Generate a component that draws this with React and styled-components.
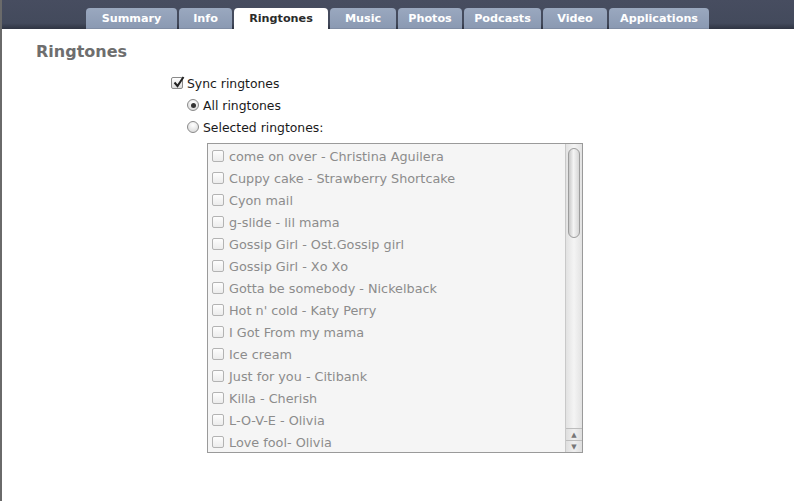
import React from "react";
import styled, { createGlobalStyle } from "styled-components";

const Global = createGlobalStyle`
  body {
    margin: 0;
    background: #fff;
    font-family: "Lucida Grande", "DejaVu Sans", sans-serif;
  }
`;

const Page = styled.div`
  width: 794px;
  height: 501px;
  overflow: hidden;
  display: flex;
  flex-direction: column;
  border-left: 2px solid #6a6a6a;
  box-sizing: border-box;
`;

const TopBar = styled.div`
  height: 29px;
  background: linear-gradient(#474d60, #434a5c 80%, #2f3442);
  display: flex;
  align-items: flex-end;
  padding-left: 84px;
  gap: 2px;
`;

const Tab = styled.div`
  height: 21px;
  border-radius: 4px 4px 0 0;
  background: ${(p) => (p.$active ? "#fff" : "linear-gradient(#9aa8bf, #8a99b2)")};
  color: ${(p) => (p.$active ? "#2b2b2b" : "#fff")};
  font-family: "DejaVu Sans", sans-serif;
  font-weight: bold;
  font-size: 11.2px;
  display: flex;
  align-items: center;
  justify-content: center;
  box-shadow: ${(p) => (p.$active ? "none" : "inset 0 -1px 0 #7f8ca3")};
  width: ${(p) => p.$w}px;
  box-sizing: border-box;
`;

const Body = styled.div`
  padding: 13px 0 0 34px;
`;

const Heading = styled.h2`
  margin: 0;
  font-family: "DejaVu Sans", sans-serif;
  font-size: 16px;
  font-weight: bold;
  color: #6e6e6e;
  height: 30px;
`;

const Options = styled.div`
  margin-left: 135px;
  display: flex;
  flex-direction: column;
`;

const Row = styled.div`
  display: flex;
  align-items: center;
  height: 22px;
  gap: 4px;
  margin-left: ${(p) => p.$indent || 0}px;
  font-size: 12.4px;
  color: #1a1a1a;
`;

const Check = styled.span`
  width: 12px;
  height: 12px;
  box-sizing: border-box;
  border: 1px solid ${(p) => (p.$dim ? "#b3b3b3" : "#8a8a8a")};
  border-radius: 2px;
  background: ${(p) => (p.$dim ? "linear-gradient(#fdfdfd, #ececec)" : "linear-gradient(#fff, #dcdcdc)")};
  position: relative;
  flex: none;
`;

const Tick = styled.svg`
  position: absolute;
  left: 0;
  top: -3px;
`;

const Radio = styled.span`
  width: 12px;
  height: 12px;
  box-sizing: border-box;
  border-radius: 50%;
  border: 1px solid #8a8a8a;
  background: radial-gradient(circle at 50% 30%, #fff, #d4d4d4);
  display: flex;
  align-items: center;
  justify-content: center;
  flex: none;
  &::after {
    content: "";
    width: 5px;
    height: 5px;
    border-radius: 50%;
    background: ${(p) => (p.$on ? "#333" : "transparent")};
  }
`;

const ListBox = styled.div`
  margin: 5px 0 0 36px;
  width: 376px;
  height: 310px;
  border: 1px solid #9a9a9a;
  background: #f5f5f5;
  box-sizing: border-box;
  display: flex;
  overflow: hidden;
`;

const Items = styled.div`
  flex: 1;
  padding: 1px 0 0 4px;
`;

const Item = styled.div`
  display: flex;
  align-items: center;
  gap: 5px;
  height: 22px;
  font-size: 12.8px;
  color: #8c8c8c;
  white-space: nowrap;
`;

const Scroll = styled.div`
  width: 16px;
  border-left: 1px solid #c9c9c9;
  background: linear-gradient(90deg, #e2e2e2, #f4f4f4 50%, #e2e2e2);
  display: flex;
  flex-direction: column;
`;

const Track = styled.div`
  flex: 1;
  padding: 4px 2px 0;
`;

const Thumb = styled.div`
  height: 88px;
  border-radius: 6px;
  border: 1px solid #9c9c9c;
  background: linear-gradient(90deg, #c8c8c8, #f4f4f4 45%, #d6d6d6);
`;

const Arrow = styled.div`
  height: 11px;
  border-top: 1px solid #bdbdbd;
  display: flex;
  align-items: center;
  justify-content: center;
  font-size: 7px;
  color: #777;
  background: linear-gradient(90deg, #dedede, #f0f0f0 50%, #dedede);
`;

const tabs = [
  { t: "Summary", w: 91 },
  { t: "Info", w: 53 },
  { t: "Ringtones", w: 94, active: true },
  { t: "Music", w: 66 },
  { t: "Photos", w: 64 },
  { t: "Podcasts", w: 77 },
  { t: "Video", w: 64 },
  { t: "Applications", w: 100 },
];

const songs = [
  "come on over - Christina Aguilera",
  "Cuppy cake - Strawberry Shortcake",
  "Cyon mail",
  "g-slide - lil mama",
  "Gossip Girl - Ost.Gossip girl",
  "Gossip Girl - Xo Xo",
  "Gotta be somebody - Nickelback",
  "Hot n' cold - Katy Perry",
  "I Got From my mama",
  "Ice cream",
  "Just for you - Citibank",
  "Killa - Cherish",
  "L-O-V-E - Olivia",
  "Love fool- Olivia",
];

export default function App() {
  return (
    <>
      <Global />
      <Page>
        <TopBar>
          {tabs.map((tab) => (
            <Tab key={tab.t} $active={tab.active} $w={tab.w}>
              {tab.t}
            </Tab>
          ))}
        </TopBar>
        <Body>
          <Heading>Ringtones</Heading>
          <Options>
            <Row>
              <Check>
                <Tick width="14" height="14" viewBox="0 0 14 14">
                  <path d="M2.5 7.5 L5.5 11 L11.5 2" stroke="#222" strokeWidth="2" fill="none" />
                </Tick>
              </Check>
              Sync ringtones
            </Row>
            <Row $indent={16}>
              <Radio $on />
              All ringtones
            </Row>
            <Row $indent={16}>
              <Radio />
              Selected ringtones:
            </Row>
            <ListBox>
              <Items>
                {songs.map((s) => (
                  <Item key={s}>
                    <Check $dim />
                    {s}
                  </Item>
                ))}
              </Items>
              <Scroll>
                <Track>
                  <Thumb />
                </Track>
                <Arrow>▲</Arrow>
                <Arrow>▼</Arrow>
              </Scroll>
            </ListBox>
          </Options>
        </Body>
      </Page>
    </>
  );
}
